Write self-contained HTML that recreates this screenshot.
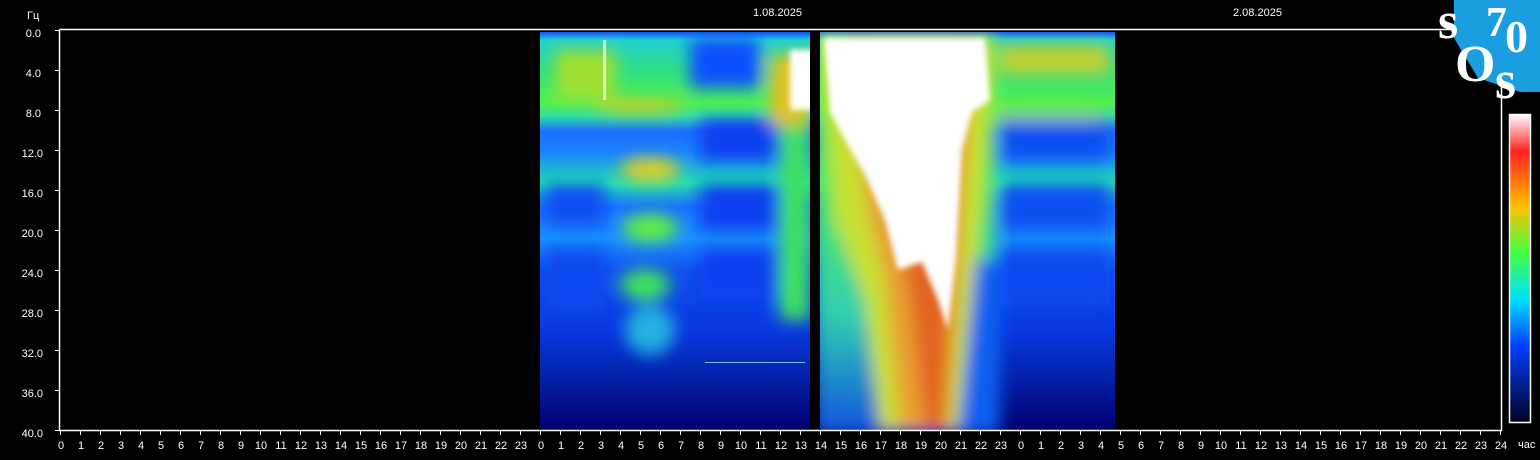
<!DOCTYPE html>
<html><head><meta charset="utf-8"><style>
html,body{margin:0;padding:0;background:#000;width:1540px;height:460px;overflow:hidden}
svg{display:block}
text{font-family:"Liberation Sans",sans-serif;fill:#fff;font-size:11px}
</style></head><body>
<svg width="1540" height="460" viewBox="0 0 1540 460" xmlns="http://www.w3.org/2000/svg">
<defs>
<linearGradient id="base" x1="0" y1="0" x2="0" y2="1">
<stop offset="0" stop-color="#1050ff"/>
<stop offset="0.02" stop-color="#20d0d0"/>
<stop offset="0.1" stop-color="#30e080"/>
<stop offset="0.18" stop-color="#50f050"/>
<stop offset="0.21" stop-color="#30e0a0"/>
<stop offset="0.25" stop-color="#1a70ff"/>
<stop offset="0.3" stop-color="#1a80ff"/>
<stop offset="0.38" stop-color="#20e0b0"/>
<stop offset="0.44" stop-color="#1a70ff"/>
<stop offset="0.52" stop-color="#1a90ff"/>
<stop offset="0.6" stop-color="#1050f0"/>
<stop offset="0.75" stop-color="#0838e0"/>
<stop offset="0.85" stop-color="#0425b0"/>
<stop offset="1" stop-color="#000070"/>
</linearGradient>
<linearGradient id="hotv" x1="0" y1="0" x2="0" y2="1">
<stop offset="0" stop-color="#a0e838"/>
<stop offset="0.4" stop-color="#50e860"/>
<stop offset="0.7" stop-color="#30d0b0"/>
<stop offset="1" stop-color="#1050e0"/>
</linearGradient>
<linearGradient id="cb" x1="0" y1="0" x2="0" y2="1">
<stop offset="0" stop-color="#ffffff"/>
<stop offset="0.12" stop-color="#ff2020"/>
<stop offset="0.3" stop-color="#ffc000"/>
<stop offset="0.45" stop-color="#40ff40"/>
<stop offset="0.6" stop-color="#00e0ff"/>
<stop offset="0.75" stop-color="#0040ff"/>
<stop offset="1" stop-color="#000020"/>
</linearGradient>
<filter id="bl" filterUnits="userSpaceOnUse" x="0" y="0" width="1540" height="460"><feGaussianBlur stdDeviation="8"/></filter>
<filter id="bl2" filterUnits="userSpaceOnUse" x="0" y="0" width="1540" height="460"><feGaussianBlur stdDeviation="3"/></filter>
<clipPath id="c1"><rect x="540" y="32" width="270" height="398"/></clipPath>
<clipPath id="c2"><rect x="820" y="32" width="295" height="398"/></clipPath>
</defs>
<g clip-path="url(#c1)">
<rect x="540" y="32" width="270" height="398" fill="url(#base)"/>
<g filter="url(#bl)">
<ellipse cx="650" cy="170" rx="30" ry="12" fill="#e0d020"/>
<ellipse cx="650" cy="228" rx="28" ry="14" fill="#60f040"/>
<ellipse cx="645" cy="285" rx="25" ry="16" fill="#40e060"/>
<ellipse cx="650" cy="330" rx="25" ry="25" fill="#20b0e0"/>
<ellipse cx="640" cy="107" rx="45" ry="6" fill="#e0c020"/>
<rect x="700" y="120" width="80" height="40" fill="#1040f0"/>
<rect x="700" y="185" width="80" height="45" fill="#1040f0"/>
<rect x="700" y="250" width="80" height="50" fill="#1040f0"/>
<rect x="545" y="185" width="60" height="40" fill="#1050f0"/>
<rect x="545" y="250" width="60" height="60" fill="#1048f0"/>
<rect x="555" y="50" width="60" height="50" fill="#a0e030"/>
<rect x="690" y="38" width="70" height="50" fill="#1050ff"/>
<rect x="780" y="120" width="30" height="200" fill="#40e060"/>
<rect x="770" y="55" width="40" height="70" fill="#e0c020"/>
</g>
<rect x="790" y="50" width="25" height="60" fill="#fff" filter="url(#bl2)"/>
<rect x="603" y="40" width="3" height="60" fill="#fff" opacity="0.7"/>
<rect x="705" y="362" width="100" height="1" fill="#80c0ff"/>
</g>
<g clip-path="url(#c2)">
<rect x="820" y="32" width="295" height="398" fill="url(#base)"/>
<g filter="url(#bl)">
<rect x="815" y="35" width="180" height="400" fill="url(#hotv)"/>
<rect x="1000" y="45" width="110" height="30" fill="#c0d030"/>
<rect x="995" y="110" width="110" height="10" fill="#a0e030"/>
<rect x="1000" y="120" width="110" height="40" fill="#1050f0"/>
<rect x="1000" y="185" width="110" height="45" fill="#1050f0"/>
<rect x="1000" y="250" width="110" height="55" fill="#1048f0"/>
<rect x="960" y="260" width="40" height="170" fill="#1060f0"/>
<path d="M825 40H992L982 200L958 430H880L865 300L835 220Z" fill="#c8e030"/>
<path d="M850 40H975L963 200L948 430H900L885 280L865 200Z" fill="#e8a030"/>
<path d="M885 60H960L955 250L945 430H925L910 300L895 220Z" fill="#e05a20" opacity="0.85"/>
</g>
<g filter="url(#bl2)">
<path d="M824 38H985L990 100L972 112L962 150L956 260L948 330L938 300L922 262L898 270L885 220L865 175L845 140L830 112Z" fill="#fff"/>
</g>
</g>
<g stroke="#fff" stroke-width="1.5" fill="none">
<path d="M59.5 29.5H1450M59.5 29.5V430.5H1501.5V85"/>
</g>
<g stroke="#fff" stroke-width="1">
<path d="M55 30.5h5M55 70.5h5M55 110.5h5M55 150.5h5M55 190.5h5M55 230.5h5M55 270.5h5M55 310.5h5M55 350.5h5M55 390.5h5M55 430.5h5"/>
</g>
<g id="ticks" stroke="#fff" stroke-width="1"></g>
<g text-anchor="end">
<text x="41" y="37">0.0</text><text x="41" y="77">4.0</text><text x="41" y="117">8.0</text>
<text x="43" y="157">12.0</text><text x="43" y="197">16.0</text><text x="43" y="237">20.0</text>
<text x="43" y="277">24.0</text><text x="43" y="317">28.0</text><text x="43" y="357">32.0</text>
<text x="43" y="397">36.0</text><text x="43" y="437">40.0</text>
</g>
<text x="27" y="19">Гц</text>
<text x="753" y="16">1.08.2025</text>
<text x="1233" y="16">2.08.2025</text>
<text x="1518" y="448">час</text>
<g id="hl" text-anchor="middle"></g>
<rect x="1509.5" y="114.5" width="21" height="308" fill="url(#cb)" stroke="#fff" stroke-width="1.5"/>
<polygon points="1454,0 1540,0 1540,92 1520,92 1478,78 1454,38" fill="#1a9ee0"/>
<text x="1438" y="38" style="font-family:'Liberation Serif',serif;font-size:52px;font-weight:bold">s</text>
<text x="1486" y="36" style="font-family:'Liberation Serif',serif;font-size:42px;font-weight:bold">7</text>
<text x="1505" y="52" style="font-family:'Liberation Serif',serif;font-size:46px;font-weight:bold">0</text>
<text x="1455" y="81" style="font-family:'Liberation Serif',serif;font-size:52px;font-weight:bold">O</text>
<text x="1495" y="98" style="font-family:'Liberation Serif',serif;font-size:54px;font-weight:bold">s</text>
</svg>
<script>
var t=document.getElementById('ticks'),h=document.getElementById('hl'),ns='http://www.w3.org/2000/svg',d='';
for(var i=0;i<=72;i++){var x=60+20*i;d+='M'+(x+0.5)+' 430v5';var e=document.createElementNS(ns,'text');e.setAttribute('x',x+1);e.setAttribute('y',449);e.textContent=(i==72?24:i%24);h.appendChild(e);}
var p=document.createElementNS(ns,'path');p.setAttribute('d',d);t.appendChild(p);
</script>
</body></html>
